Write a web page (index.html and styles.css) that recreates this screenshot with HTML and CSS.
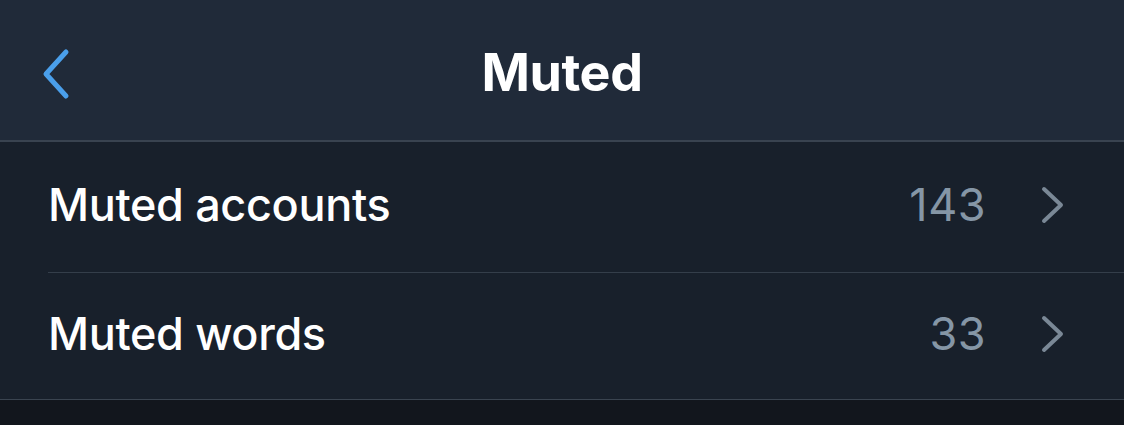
FILE: index.html
```html
<!DOCTYPE html>
<html>
<head>
<meta charset="utf-8">
<link rel="stylesheet" href="styles.css">
</head>
<body>
<div class="screen">
  <header class="nav">
    <svg class="back" width="40" height="60" viewBox="0 0 40 60">
      <polyline points="27,7 7,29 27,51" fill="none" stroke="#4a9feb" stroke-width="5" stroke-linecap="round" stroke-linejoin="round"/>
    </svg>
    <h1 class="title">Muted</h1>
  </header>
  <ul class="list">
    <li class="row">
      <span class="label">Muted accounts</span>
      <span class="count">143</span>
      <svg class="chev" width="30" height="40" viewBox="0 0 30 40">
        <polyline points="8,4 25,20 8,36" fill="none" stroke="#7a8896" stroke-width="4" stroke-linecap="round" stroke-linejoin="round"/>
      </svg>
    </li>
    <li class="row">
      <span class="label">Muted words</span>
      <span class="count">33</span>
      <svg class="chev" width="30" height="40" viewBox="0 0 30 40">
        <polyline points="8,4 25,20 8,36" fill="none" stroke="#7a8896" stroke-width="4" stroke-linecap="round" stroke-linejoin="round"/>
      </svg>
    </li>
  </ul>
</div>
</body>
</html>
```
FILE: styles.css
```css
html, body {
  margin: 0;
  padding: 0;
  background: #12161d;
}
.screen {
  width: 1124px;
  height: 425px;
  font-family: Inter, "Noto Sans", sans-serif;
  color: #ffffff;
  background: #12161d;
}
.nav {
  height: 140px;
  background: #202a39;
  border-bottom: 2px solid #394350;
  display: flex;
  align-items: center;
  justify-content: center;
  position: relative;
}
.back {
  position: absolute;
  left: 39px;
  top: 45px;
}
.title {
  margin: 0;
  font-size: 52px;
  font-weight: 700;
  letter-spacing: -0.4px;
  line-height: 1;
  padding-top: 6px;
}
.list {
  list-style: none;
  margin: 0;
  padding: 0 0 0 48px;
  background: #18202b;
  border-bottom: 1px solid #3a4450;
}
.row {
  display: flex;
  align-items: center;
  height: 130px;
  padding-right: 58px;
}
.row + .row {
  border-top: 1px solid #343e4a;
  height: 126px;
}
.label {
  flex: 1;
  font-size: 45px;
  font-weight: 500;
  letter-spacing: -0.35px;
  line-height: 1;
  padding-bottom: 6px;
}
.count {
  font-size: 45px;
  color: #8596a6;
  margin-right: 50px;
  letter-spacing: 0.5px;
  line-height: 1;
  padding-bottom: 6px;
}
.chev {
  display: block;
  margin-top: -4px;
}
```
